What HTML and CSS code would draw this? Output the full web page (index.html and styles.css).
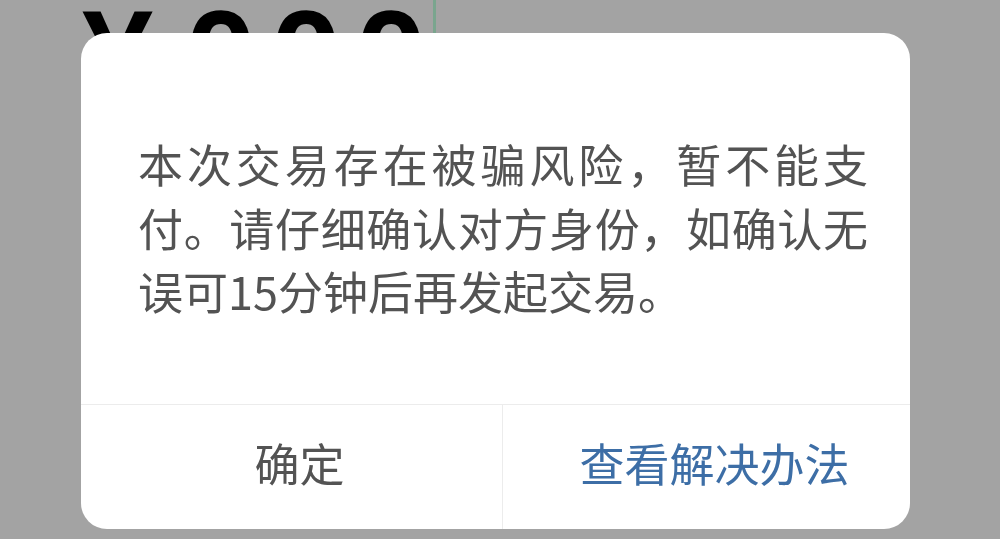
FILE: index.html
```html
<!DOCTYPE html>
<html lang="zh-CN">
<head>
    <meta charset="UTF-8">
    <meta name="viewport" content="width=device-width, initial-scale=1.0">
    <title>支付提示</title>
    <link rel="stylesheet" href="styles.css">
</head>
<body>
    <div class="page">
        <div class="amount-row">
            <span class="amount currency">¥</span>
            <span class="amount digits">000</span>
            <span class="cursor"></span>
        </div>
    </div>

    <div class="mask">
        <div class="dialog">
            <div class="dialog-body">
                <p class="dialog-text">本次交易存在被骗风险，暂不能支付。请仔细确认对方身份，如确认无误可15分钟后再发起交易。</p>
            </div>
            <div class="dialog-actions">
                <button class="btn btn-ok">确定</button>
                <button class="btn btn-help">查看解决办法</button>
            </div>
        </div>
    </div>
</body>
</html>
```

FILE: styles.css
```css
html, body {
    margin: 0;
    height: 100%;
    overflow: hidden;
}
body {
    background-color: #a3a3a3;
    font-family: "Noto Sans CJK SC", "Noto Sans", sans-serif;
}
.page {
    padding-left: 82px;
}
.amount-row {
    display: flex;
    align-items: flex-start;
    height: 120px;
}
.amount {
    font-family: "Liberation Sans", Arial, sans-serif;
    font-weight: bold;
    font-size: 128px;
    line-height: 1;
    color: #000;
    margin-top: -8px;
}
.currency {
    margin-right: 32px;
}
.digits {
    letter-spacing: 14px;
}
.cursor {
    width: 3px;
    height: 60px;
    margin-left: -8px;
    background-color: #7aa58e;
}
.mask {
    position: fixed;
    inset: 0;
    padding: 33px 90px 0 81px;
}
.dialog {
    background-color: #fff;
    border-radius: 26px;
    height: 496px;
    display: flex;
    flex-direction: column;
    overflow: hidden;
}
.dialog-body {
    height: 372px;
    box-sizing: border-box;
    padding: 99px 42px 0 57px;
    border-bottom: 1px solid #ececec;
}
.dialog-text {
    margin: 0;
    font-size: 45px;
    line-height: 63.5px;
    color: #535353;
    text-align: justify;
}
.dialog-actions {
    flex: 1;
    display: grid;
    grid-template-columns: 422px 1fr;
}
.btn {
    border: none;
    background: none;
    font-family: inherit;
    font-size: 45px;
    padding: 0 0 10px 16px;
    cursor: pointer;
}
.btn-ok {
    color: #535353;
    border-right: 1px solid #ececec;
}
.btn-help {
    color: #3d6ea6;
}
```
